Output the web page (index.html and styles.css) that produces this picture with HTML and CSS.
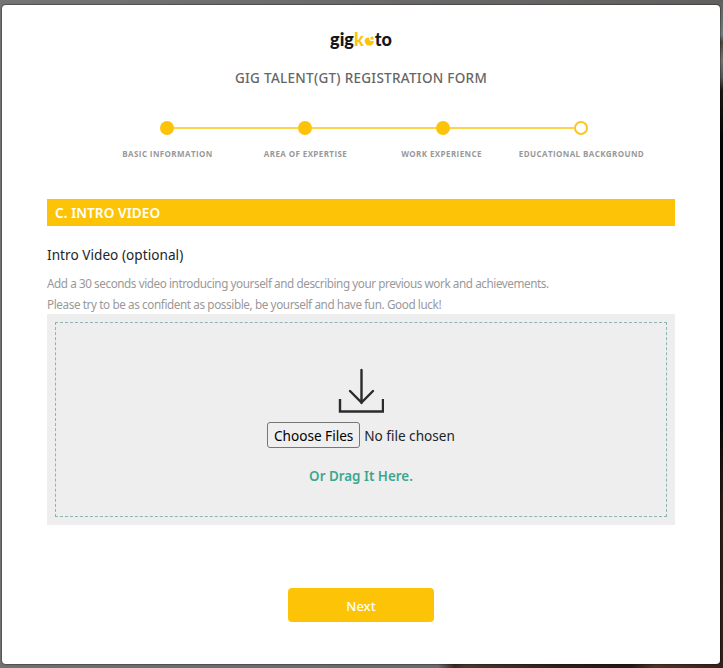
FILE: index.html
```html
<!DOCTYPE html>
<html lang="en">
<head>
<meta charset="utf-8">
<title>Gigkoto registration</title>
<link rel="stylesheet" href="styles.css">
</head>
<body>
<main class="card">
  <div class="logo" role="img" aria-label="gigkoto"><span>gig</span><span class="gold">k</span><svg class="mark" viewBox="0 0 11 10" width="11" height="10"><path d="M.6 4.6A4.7 4.7 0 1 0 10 5.2L6.2 5 4.6 1.6Q1.5 1.5.6 4.6Z" fill="#fcc309"/><circle cx="8" cy="2.2" r="1.6" fill="#fcc309"/></svg><span>to</span></div>
  <h1 class="title"><span>GIG TALENT(GT) REGISTRATION FORM</span></h1>
  <ol class="steps">
    <li class="step done"><i class="dot"></i><span>BASIC INFORMATION</span></li>
    <li class="step done"><i class="dot"></i><span>AREA OF EXPERTISE</span></li>
    <li class="step done work"><i class="dot"></i><span>WORK EXPERIENCE</span></li>
    <li class="step"><i class="dot"></i><span>EDUCATIONAL BACKGROUND</span></li>
  </ol>
  <h2 class="section"><span>C. INTRO VIDEO</span></h2>
  <div class="label"><span>Intro Video (optional)</span></div>
  <p class="help">Add a 30 seconds video introducing yourself and describing your previous work and achievements.<br><span class="tip">Please try to be as confident as possible, be yourself and have fun. Good luck!</span></p>
  <div class="upload">
    <div class="drop">
      <svg class="icon" viewBox="0 0 46 46" width="46" height="46" fill="none" stroke="#2b2b2b" stroke-width="2.4"><path d="M23.5 2V35M12 23 23.5 34.5 35 23" stroke-linecap="round"/><path d="M2 31V43.5H45V31"/></svg>
      <div class="file"><button class="choose" type="button">Choose Files</button><span class="none">No file chosen</span></div>
      <div class="drag"><span>Or Drag It Here.</span></div>
    </div>
  </div>
  <button class="next" type="button">Next</button>
</main>
</body>
</html>
```
FILE: styles.css
```css
* { box-sizing: border-box; }
body {
  margin: 0;
  height: 668px;
  padding: 5px 3px 4px 2px;
  overflow: hidden;
  font-family: "Noto Sans", "Open Sans", sans-serif;
  background:
    linear-gradient(#5f5e5c 0, #777b7d 35px, #4c443f 42px, #77716d 60px, #555 78px, #211713 90px, #050404 140px, #050404 410px, #2e1b16 500px, #35201a) right / 3px 100% no-repeat,
    linear-gradient(90deg, #717171 0, #6b6b69 438px, #3a2822 455px, #493830 465px, #2e1e1a 560px, #241815 630px, #50332a 655px, #35201a 100%) bottom / 100% 5px no-repeat,
    linear-gradient(90deg, #757575, #62605e);
}
.card {
  height: 659px;
  padding: 0 45px;
  background: #fff;
  border-radius: 4px;
  box-shadow: 0 0 1px 1px rgba(0, 0, 0, .3);
  display: flex;
  flex-direction: column;
}
.logo {
  height: 26px;
  margin-top: 21px;
  display: flex;
  justify-content: center;
  align-items: baseline;
  font: 900 18px/26px Lato, sans-serif;
  color: #161616;
}
.gold { color: #fcc309; }
.title {
  margin: 16px 0 0;
  font-size: 13.5px;
  line-height: 20px;
  font-weight: 500;
  letter-spacing: .28px;
  color: #666;
  text-align: center;
}
.steps {
  list-style: none;
  margin: 33px 0 0 51px;
  padding: 0;
  display: grid;
  grid-template-columns: repeat(4, 138px);
  height: 48px;
}
.step {
  display: flex;
  flex-direction: column;
  align-items: center;
  position: relative;
  white-space: nowrap;
  font: 700 8px/12px "Open Sans", sans-serif;
  letter-spacing: .4px;
  color: #999;
}
.step span { padding-left: 1px; }
.work span { margin-left: -4px; }
.dot {
  width: 14px;
  height: 14px;
  border: 2px solid #fcc520;
  border-radius: 50%;
  background: #fff;
  margin-bottom: 13px;
}
.done .dot { background: #fcc309; border-color: #fcc309; }
.done::after {
  content: "";
  position: absolute;
  left: 76px;
  top: 6px;
  width: 124px;
  height: 2px;
  background: #fdd34c;
}
.section {
  margin: 30px 0 0;
  height: 27px;
  padding-left: 8px;
  background: #fdc407;
  color: #fff;
  font-size: 13.6px;
  line-height: 27px;
  letter-spacing: .06px;
  font-weight: 600;
}
.label {
  margin-top: 19px;
  font-size: 13.6px;
  line-height: 20px;
  letter-spacing: .04px;
  color: #212529;
}
.help {
  margin: 8px 0 0;
  font-size: 11.7px;
  line-height: 21px;
  letter-spacing: -.42px;
  color: #999;
  white-space: nowrap;
}
.tip { letter-spacing: -.39px; }
.upload {
  height: 211px;
  margin-top: -1px;
  padding: 8px;
  background: #eee;
}
.drop {
  height: 195px;
  border: 1px dashed #8cb4b2;
  display: flex;
  flex-direction: column;
  align-items: center;
  padding-top: 45px;
}
.file {
  display: flex;
  align-items: center;
  margin-top: 8px;
  font-size: 13.6px;
  color: #212529;
  white-space: nowrap;
}
.choose {
  width: 93px;
  height: 26px;
  padding: 0;
  margin-right: 4px;
  border: 1px solid #767676;
  border-radius: 3px;
  background: #efefef;
  color: #000;
  font: 13.6px "Noto Sans", sans-serif;
}
.drag {
  margin-top: 18px;
  font-size: 13.4px;
  line-height: 20px;
  font-weight: 600;
  color: #3da68f;
}
.next {
  width: 146px;
  height: 34px;
  margin: 63px auto 0;
  padding: 2px 0 0;
  border: 0;
  border-radius: 4px;
  background: #fdc407;
  color: #fff;
  font: 500 13px "Noto Sans", sans-serif;
}
```
